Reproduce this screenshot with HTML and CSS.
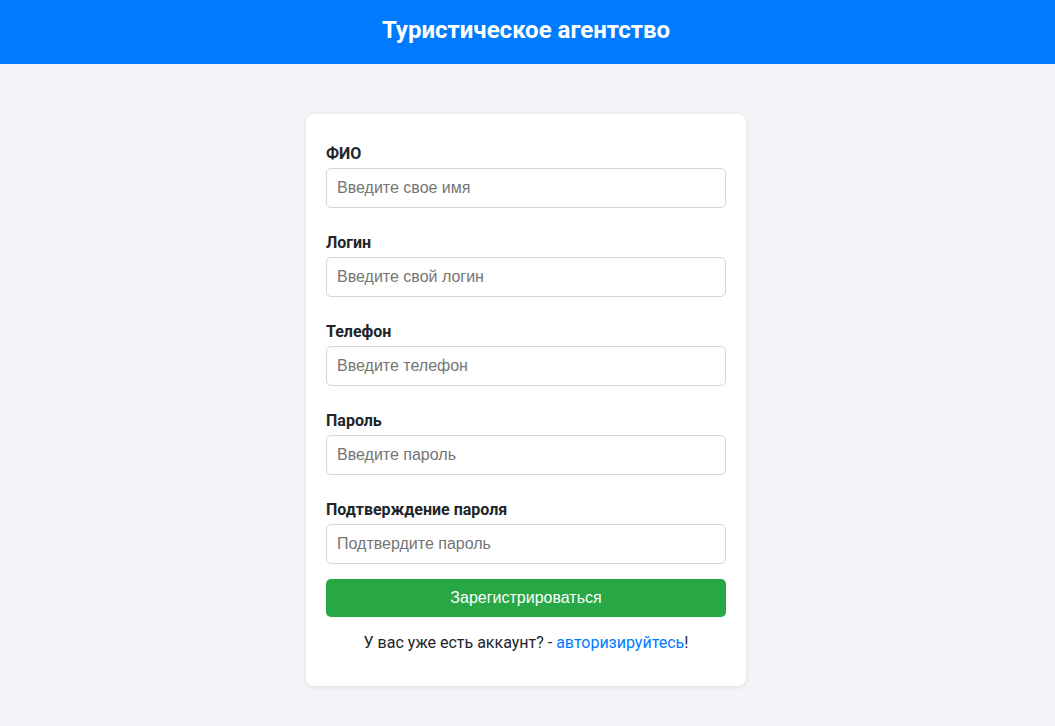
FILE: index.html
```html
<!DOCTYPE html>
<html lang="ru">
<head>
<meta charset="utf-8">
<title>Регистрация</title>
<link rel="stylesheet" href="styles.css">
</head>
<body>
<header class="topbar">
  <h1 class="topbar-title">Туристическое агентство</h1>
</header>
<main class="page">
  <form class="card">
    <div class="field">
      <label class="field-label">ФИО</label>
      <input class="field-input" type="text" placeholder="Введите свое имя">
    </div>
    <div class="field">
      <label class="field-label">Логин</label>
      <input class="field-input" type="text" placeholder="Введите свой логин">
    </div>
    <div class="field">
      <label class="field-label">Телефон</label>
      <input class="field-input" type="text" placeholder="Введите телефон">
    </div>
    <div class="field">
      <label class="field-label">Пароль</label>
      <input class="field-input" type="password" placeholder="Введите пароль">
    </div>
    <div class="field field-last">
      <label class="field-label">Подтверждение пароля</label>
      <input class="field-input" type="password" placeholder="Подтвердите пароль">
    </div>
    <button class="submit" type="button">Зарегистрироваться</button>
    <p class="note">У вас уже есть аккаунт? - <a class="note-link" href="#">авторизируйтесь</a>!</p>
  </form>
</main>
</body>
</html>
```
FILE: styles.css
```css
* { box-sizing: border-box; }
html, body { margin: 0; padding: 0; }
body {
  background: #f4f4f8;
  font-family: Roboto, "Liberation Sans", Arial, sans-serif;
  color: #212529;
  min-height: 726px;
}
.topbar {
  background: #007bff;
  height: 64px;
  display: flex;
  align-items: center;
  justify-content: center;
  padding-right: 3px;
}
.topbar-title {
  margin: 0;
  color: #fff;
  font-size: 24px;
  font-weight: 700;
  line-height: 1;
  padding-bottom: 4px;
}
.page {
  display: flex;
  justify-content: center;
  padding-top: 50px;
  padding-right: 3px;
}
.card {
  width: 440px;
  background: #fff;
  border-radius: 8px;
  box-shadow: 0 1px 4px rgba(0,0,0,0.1);
  padding: 30px 20px 34px;
}
.field {
  display: flex;
  flex-direction: column;
  margin-bottom: 25px;
}
.field-last { margin-bottom: 15px; }
.field-label {
  font-size: 16px;
  font-weight: 700;
  line-height: 19px;
  margin-bottom: 5px;
  color: #212529;
}
.field-input {
  height: 40px;
  width: 100%;
  border: 1px solid #d6d6d6;
  border-radius: 5px;
  padding: 0 10px;
  font-family: "Liberation Sans", Arial, sans-serif;
  font-size: 16px;
  color: #212529;
  background: #fff;
}
.field-input::placeholder { color: #757575; }
.submit {
  display: block;
  width: 100%;
  height: 38px;
  border: none;
  border-radius: 5px;
  background: #28a745;
  color: #fff;
  font-family: "Liberation Sans", Arial, sans-serif;
  font-size: 16px;
}
.note {
  margin: 16px 0 0;
  text-align: center;
  font-size: 16px;
  line-height: 19px;
  color: #212529;
}
.note-link {
  color: #007bff;
  text-decoration: none;
}
```
